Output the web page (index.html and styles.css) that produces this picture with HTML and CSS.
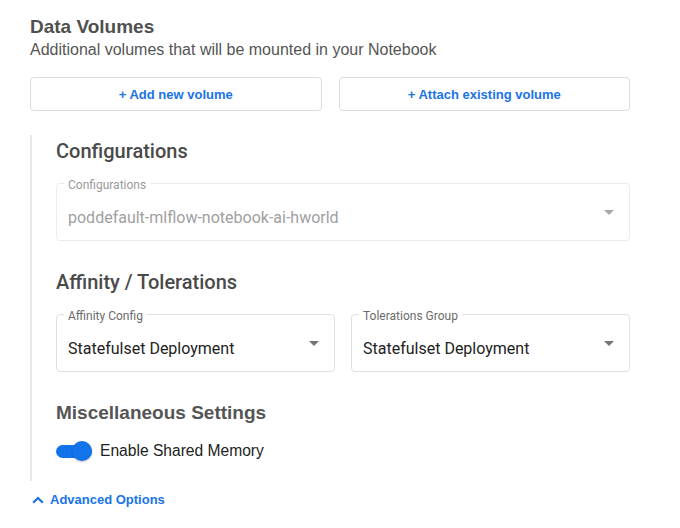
FILE: index.html
```html
<!DOCTYPE html>
<html>
<head>
<meta charset="utf-8">
<link rel="stylesheet" href="styles.css">
</head>
<body>
<main class="page">
  <h2 class="title">Data Volumes</h2>
  <p class="subtitle">Additional volumes that will be mounted in your Notebook</p>
  <div class="actions">
    <button class="btn">+ Add new volume</button>
    <button class="btn">+ Attach existing volume</button>
  </div>

  <section class="group">
    <h3 class="heading">Configurations</h3>
    <fieldset class="field disabled">
      <legend>Configurations</legend>
      <div class="row">
        <span class="value">poddefault-mlflow-notebook-ai-hworld</span>
        <span class="arrow"></span>
      </div>
    </fieldset>

    <h3 class="heading gap">Affinity / Tolerations</h3>
    <div class="pair">
      <fieldset class="field">
        <legend>Affinity Config</legend>
        <div class="row">
          <span class="value">Statefulset Deployment</span>
          <span class="arrow"></span>
        </div>
      </fieldset>
      <fieldset class="field">
        <legend>Tolerations Group</legend>
        <div class="row">
          <span class="value">Statefulset Deployment</span>
          <span class="arrow"></span>
        </div>
      </fieldset>
    </div>

    <h3 class="heading alt gap">Miscellaneous Settings</h3>
    <label class="toggle">
      <span class="switch"><span class="thumb"></span></span>
      <span class="toggle-text">Enable Shared Memory</span>
    </label>
  </section>

  <a class="advanced">
    <svg class="chev" width="12" height="8" viewBox="0 0 12 8"><path d="M1.2 6.8 L6 2 L10.8 6.8" fill="none" stroke="#1a73e8" stroke-width="2.2"/></svg>
    <span>Advanced Options</span>
  </a>
</main>
</body>
</html>
```
FILE: styles.css
```css
* { box-sizing: border-box; }
html, body { margin: 0; padding: 0; background: #fff; }
body { font-family: Roboto, "Liberation Sans", sans-serif; }

.page {
  width: 630px;
  padding-left: 30px;
}

.title {
  margin: 16px 0 0;
  font-family: "Liberation Sans", Arial, sans-serif;
  font-weight: 700;
  font-size: 19px;
  line-height: 22px;
  color: #505050;
}

.subtitle {
  margin: 2px 0 0;
  font-family: "Liberation Sans", Arial, sans-serif;
  font-size: 16px;
  line-height: 20px;
  color: #555;
}

.actions {
  display: grid;
  grid-template-columns: 1fr 1fr;
  gap: 17px;
  margin-top: 17px;
}

.btn {
  height: 34px;
  border: 1px solid #dcdcdc;
  border-radius: 4px;
  background: #fff;
  color: #1a73e8;
  font-family: "Liberation Sans", Arial, sans-serif;
  font-weight: 700;
  font-size: 13px;
  padding: 0;
}

.group {
  margin-top: 24px;
  border-left: 2px solid #e6e8eb;
  padding: 4px 0 20px 24px;
}

.heading {
  margin: 0;
  font-family: Roboto, sans-serif;
  font-weight: 500;
  font-size: 20px;
  line-height: 24px;
  color: #4a4a4a;
}
.heading.gap { margin-top: 29px; }
.heading.alt {
  font-family: "Liberation Sans", Arial, sans-serif;
  font-weight: 700;
  font-size: 19px;
  line-height: 22px;
  color: #555;
  margin-top: 30px;
}

.field {
  margin: 11px 0 0;
  min-width: 0;
  border: 1px solid #e0e0e0;
  border-radius: 4px;
  padding: 0 15px 0 11px;
}
.field legend {
  margin-left: -4px;
  padding: 4px 4px 0;
  font-size: 12px;
  line-height: 14px;
  color: #6b6b6b;
}
.row {
  display: flex;
  align-items: center;
  padding: 16px 0 12px;
}
.value {
  flex: 1;
  font-size: 16px;
  line-height: 20px;
  color: #222;
  white-space: nowrap;
}
.arrow {
  width: 0;
  height: 0;
  border-left: 5px solid transparent;
  border-right: 5px solid transparent;
  border-top: 5px solid #757575;
  margin-bottom: 12px;
}

.field.disabled { border-color: #ececec; }
.field.disabled legend { color: #9a9a9a; }
.field.disabled .value { color: #a0a0a0; }
.field.disabled .arrow { border-top-color: #a8a8a8; }

.pair {
  display: grid;
  grid-template-columns: 1fr 1fr;
  gap: 16px;
}

.toggle {
  display: flex;
  align-items: center;
  margin-top: 17px;
  height: 20px;
}
.switch {
  position: relative;
  display: inline-block;
  width: 36px;
  height: 13px;
  border-radius: 7px;
  background: #1273ea;
}
.thumb {
  position: absolute;
  right: 0;
  top: -3.5px;
  width: 20px;
  height: 20px;
  border-radius: 50%;
  background: #1273ea;
  box-shadow: 0 1px 2px rgba(0,0,0,0.25);
}
.toggle-text {
  margin-left: 8px;
  font-family: "Liberation Sans", Arial, sans-serif;
  font-size: 15.6px;
  line-height: 20px;
  color: #222;
}

.advanced {
  display: flex;
  align-items: center;
  margin-top: 10px;
  margin-left: 2px;
  height: 18px;
  color: #1a73e8;
  font-family: "Liberation Sans", Arial, sans-serif;
  font-weight: 700;
  font-size: 13px;
  line-height: 18px;
}
.chev { margin-right: 6px; }
```
